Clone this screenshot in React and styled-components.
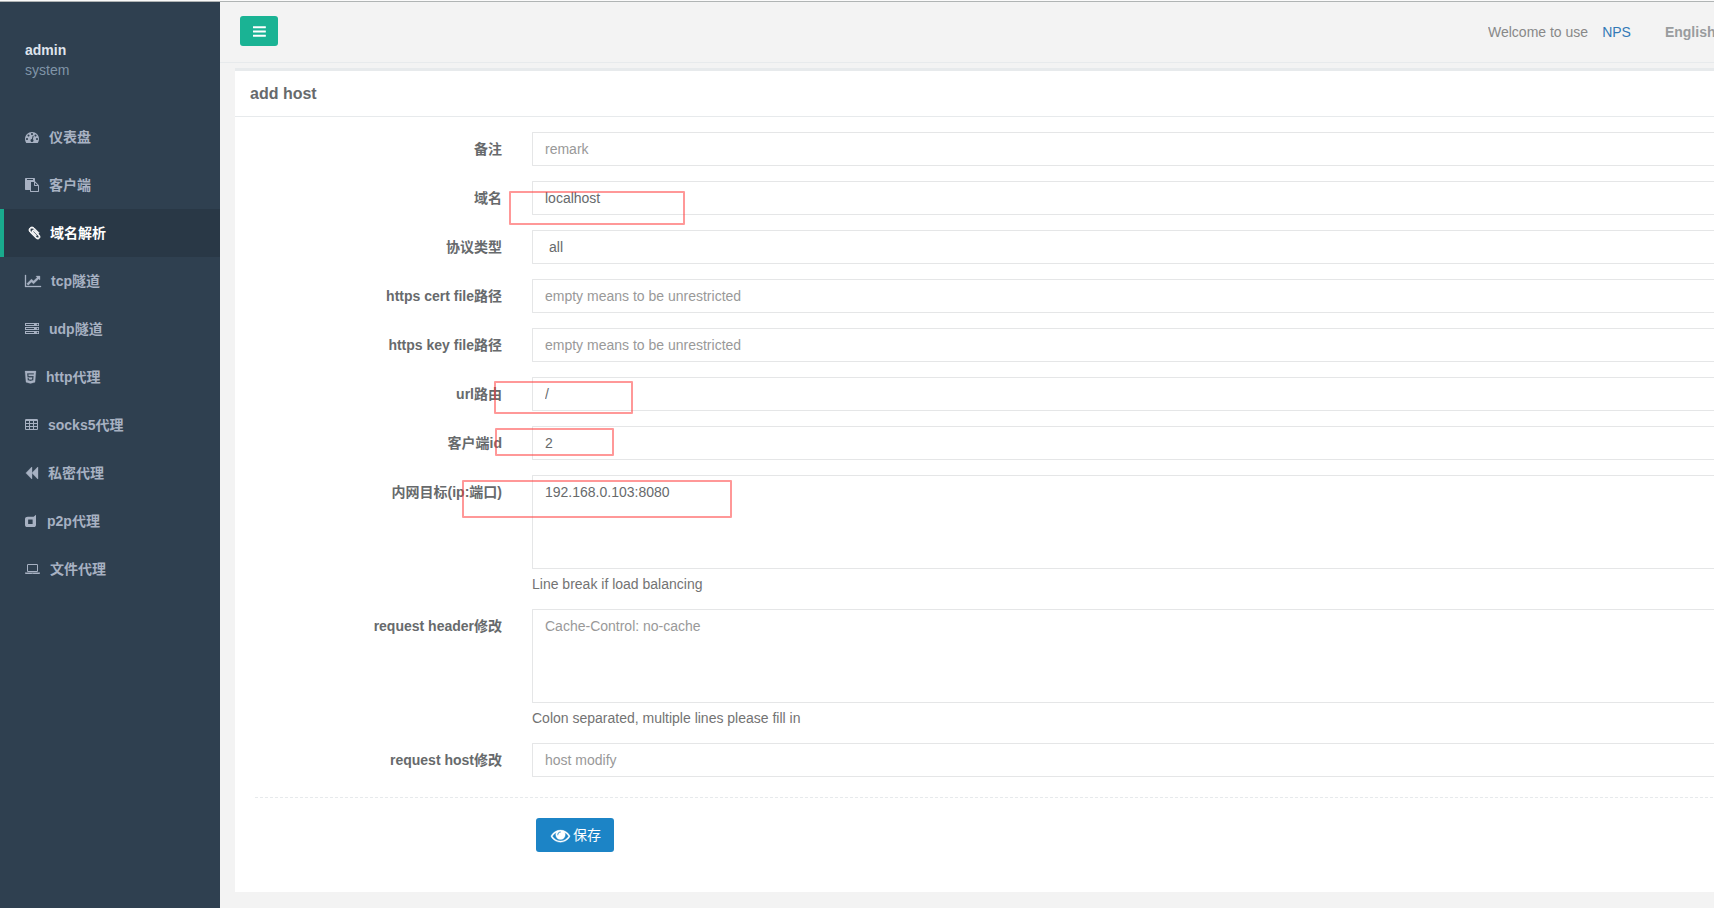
import React from 'react';
import styled, { createGlobalStyle } from 'styled-components';

const dot = 'q0-53-37.5-90.5t-90.5-37.5-90.5 37.5-37.5 90.5 37.5 90.5 90.5 37.5 90.5-37.5 37.5-90.5z';
const led = 'q0-40-28-68t-68-28-68 28-28 68 28 68 68 28 68-28 28-68z';
const cell = 'v-192q0-14-9-23t-23-9h-320q-14 0-23 9t-9 23v192q0 14 9 23t23 9h320q14 0 23-9t9-23z';

// glyphs on a 1792 unit em, w is the advance width
const icons = {
  bars: {
    w: 1536,
    d: 'M1536 1344v128q0 26-19 45t-45 19h-1408q-26 0-45-19t-19-45v-128q0-26 19-45t45-19h1408q26 0 45 19t19 45zm0-512v128q0 26-19 45t-45 19h-1408q-26 0-45-19t-19-45v-128q0-26 19-45t45-19h1408q26 0 45 19t19 45zm0-512v128q0 26-19 45t-45 19h-1408q-26 0-45-19t-19-45v-128q0-26 19-45t45-19h1408q26 0 45 19t19 45z',
  },
  dashboard: {
    w: 1792,
    d: `M384 1152${dot}m192-448${dot}m428 481l101-382q6-26-7.5-48.5t-38.5-29.5-48 6.5-30 39.5l-101 382q-60 5-107 43.5t-63 98.5q-20 77 20 146t117 89 146-20 89-117q16-60-6-117t-72-91zm660-33${dot}m-640-640${dot}m448 192${dot}m320 448q0 261-141 483-19 29-54 29h-1402q-35 0-54-29-141-221-141-483 0-182 71-348t191-286 286-191 348-71 348 71 286 191 191 286 71 348z`,
  },
  paste: {
    w: 1792,
    d: 'M768 1664h896v-640h-416q-40 0-68-28t-28-68v-416h-384v1152zm256-1440v-64q0-13-9.5-22.5t-22.5-9.5h-704q-13 0-22.5 9.5t-9.5 22.5v64q0 13 9.5 22.5t22.5 9.5h704q13 0 22.5-9.5t9.5-22.5zm256 672h299l-299-299v299zm512 128v672q0 40-28 68t-68 28h-960q-40 0-68-28t-28-68v-160h-544q-40 0-68-28t-28-68v-1344q0-40 28-68t68-28h1088q40 0 68 28t28 68v328q21 13 36 28l408 408q28 28 48 76t20 88z',
  },
  paperclip: {
    w: 1408,
    x: 192,
    bold: 110,
    d: 'M1596 1385q0 117-79 196t-196 79q-135 0-235-100l-777-776q-113-115-113-271 0-159 110-270t269-111q158 0 273 113l605 606q10 10 10 22 0 16-30.5 46.5t-46.5 30.5q-13 0-23-10l-606-607q-79-77-181-77-106 0-179 75t-73 181q0 105 76 181l776 777q63 63 145 63 64 0 106-42t42-106q0-82-63-145l-581-581q-26-24-60-24-29 0-48 19t-19 48q0 32 25 59l410 410q10 10 10 22 0 16-31 47t-47 31q-12 0-22-10l-410-410q-63-61-63-149 0-82 57-139t139-57q88 0 149 63l581 581q100 98 100 235z',
  },
  chart: {
    w: 2048,
    bold: 40,
    d: 'M2048 1536v128h-2048v-1536h128v1408h1920zm-128-1248v435q0 21-19.5 29.5t-35.5-7.5l-121-121-633 633q-10 10-23 10t-23-10l-233-233-416 416-192-192 585-585q10-10 23-10t23 10l233 233 464-464-121-121q-16-16-7.5-35.5t29.5-19.5h435q14 0 23 9t9 23z',
  },
  server: {
    w: 1792,
    d: `M128 1408h1024v-128h-1024v128zm0-512h1024v-128h-1024v128zm1568 448${led}m-1568-960h1024v-128h-1024v128zm1568 448${led}m0-512${led}m96 832v384h-1792v-384h1792zm0-512v384h-1792v-384h1792zm0-512v384h-1792v-384h1792z`,
  },
  html5: {
    w: 1408,
    bold: 30,
    d: 'M1130 589l16-175h-884l47 534h612l-22 228-197 53-196-53-13-140h-175l22 278 362 100h4v-1l359-99 50-544h-644l-15-181h674zm-1130-461h1408l-128 1438-578 162-574-162z',
  },
  table: {
    w: 1664,
    d: `M512 1376${cell}M512 992${cell}M1024 1376${cell}M1024 992${cell}M512 608${cell}M1536 1376${cell}M1024 608${cell}M1536 992${cell}M1536 608${cell}M1664 288v1088q0 66-47 113t-113 47h-1344q-66 0-113-47t-47-113v-1088q0-66 47-113t113-47h1344q66 0 113 47t47 113z`,
  },
  backward: {
    w: 1664,
    bold: 40,
    d: 'M1619 141q19-19 32-13t13 32v1472q0 26-13 32t-32-13l-710-710q-9-9-13-19v710q0 26-13 32t-32-13l-710-710q-19-19-19-45t19-45l710-710q19-19 32-13t13 32v710q4-10 13-19z',
  },
  dashcube: {
    w: 1536,
    d: 'M0 640q0-146 103-217t249-71h750l306-256v1312q0 110-78 188t-188 78h-880q-110 0-186-78t-76-188zM400 736v512q0 32 32 32h512q32 0 32-32v-512q0-32-32-32h-512q-32 0-32 32z',
  },
  laptop: {
    w: 1920,
    d: 'M416 1280q-66 0-113-47t-47-113v-704q0-66 47-113t113-47h1088q66 0 113 47t47 113v704q0 66-47 113t-113 47h-1088zm-32-864v704q0 13 9.5 22.5t22.5 9.5h1088q13 0 22.5-9.5t9.5-22.5v-704q0-13-9.5-22.5t-22.5-9.5h-1088q-13 0-22.5 9.5t-9.5 22.5zm1376 928h160v96q0 40-47 68t-113 28h-1600q-66 0-113-28t-47-68v-96h1760zm-720 96q16 0 16-16t-16-16h-160q-16 0-16 16t16 16h160z',
  },
  eye: {
    w: 1792,
    bold: 30,
    d: 'M1664 960q-152-236-381-353 61 104 61 225 0 185-131.5 316.5t-316.5 131.5-316.5-131.5-131.5-316.5q0-121 61-225-229 117-381 353 133 205 333.5 326.5t434.5 121.5 434.5-121.5 333.5-326.5zm-720-384q0-20-14-34t-34-14q-125 0-214.5 89.5t-89.5 214.5q0 20 14 34t34 14 34-14 14-34q0-86 61-147t147-61q20 0 34-14t14-34zm848 384q0 34-20 69-140 230-376.5 368.5t-499.5 138.5-499.5-139-376.5-368q-20-35-20-69t20-69q140-229 376.5-368t499.5-139 499.5 139 376.5 368q20 35 20 69z',
  },
};

const menu = [
  { icon: 'dashboard', text: '仪表盘' },
  { icon: 'paste', text: '客户端' },
  { icon: 'paperclip', text: '域名解析', active: true },
  { icon: 'chart', text: 'tcp隧道' },
  { icon: 'server', text: 'udp隧道' },
  { icon: 'html5', text: 'http代理' },
  { icon: 'table', text: 'socks5代理' },
  { icon: 'backward', text: '私密代理' },
  { icon: 'dashcube', text: 'p2p代理' },
  { icon: 'laptop', text: '文件代理' },
];

const fields = [
  { label: '备注', placeholder: 'remark' },
  { label: '域名', value: 'localhost' },
  { label: '协议类型', value: 'all', select: true },
  { label: 'https cert file路径', placeholder: 'empty means to be unrestricted' },
  { label: 'https key file路径', placeholder: 'empty means to be unrestricted' },
  { label: 'url路由', value: '/' },
  { label: '客户端id', value: '2' },
  {
    label: '内网目标(ip:端口)',
    value: '192.168.0.103:8080',
    area: true,
    help: 'Line break if load balancing',
  },
  {
    label: 'request header修改',
    placeholder: 'Cache-Control: no-cache',
    area: true,
    help: 'Colon separated, multiple lines please fill in',
  },
  { label: 'request host修改', placeholder: 'host modify' },
];

function Icon({ name, size = 14 }) {
  const { w, d, x = 0, bold = 0 } = icons[name];
  return (
    <Glyph viewBox={`${x} 0 ${w} 1792`} width={(w / 1792) * size} height={size}>
      <path
        d={d}
        fillRule={name === 'backward' ? 'nonzero' : 'evenodd'}
        stroke="currentColor"
        strokeWidth={bold}
      />
    </Glyph>
  );
}

function Field({ label, value, placeholder, select, area, help }) {
  return (
    <Group>
      <Label>{label}</Label>
      <Control>
        {select && (
          <Select defaultValue={value}>
            <option>{value}</option>
          </Select>
        )}
        {area && <TextArea defaultValue={value} placeholder={placeholder} spellCheck="false" />}
        {!select && !area && <Input defaultValue={value} placeholder={placeholder} />}
        {help && <Help>{help}</Help>}
      </Control>
    </Group>
  );
}

function App() {
  return (
    <Page>
      <GlobalStyle />
      <Wrapper>
        <Sidebar>
          <Profile>
            <strong>admin</strong>
            <span>system</span>
          </Profile>
          {menu.map((item) => (
            <MenuItem key={item.text} $active={item.active}>
              <Icon name={item.icon} />
              <span>{item.text}</span>
            </MenuItem>
          ))}
        </Sidebar>
        <Main>
          <TopBar>
            <Toggle>
              <Icon name="bars" size={15} />
            </Toggle>
            <TopLinks>
              <span>Welcome to use</span>
              <a>NPS</a>
              <strong>English</strong>
            </TopLinks>
          </TopBar>
          <Box>
            <BoxTitle>add host</BoxTitle>
            <Form>
              {fields.map((field) => (
                <Field key={field.label} {...field} />
              ))}
              <Divider />
              <Save>
                <Icon name="eye" size={19} />
                保存
              </Save>
            </Form>
          </Box>
        </Main>
      </Wrapper>
      <Mark $x={509} $y={191} $w={176} $h={34} />
      <Mark $x={494} $y={381} $w={139} $h={33} />
      <Mark $x={495} $y={428} $w={119} $h={28} />
      <Mark $x={462} $y={480} $w={270} $h={38} />
    </Page>
  );
}

export default App;

const GlobalStyle = createGlobalStyle`
  * {
    box-sizing: border-box;
  }
  body {
    margin: 0;
    overflow: hidden;
    color: #676a6c;
    background: #f3f3f3;
    font: 14px/20px 'Liberation Sans', 'Noto Sans CJK SC', sans-serif;
  }
  input, textarea, select, button {
    font: inherit;
    color: inherit;
  }
`;

const Page = styled.div`
  position: relative;
  height: 908px;
  border-top: 1px solid #fafafa;
  overflow: hidden;
`;

const Wrapper = styled.div`
  display: flex;
  height: 907px;
  border-top: 1px solid #b0b4b4;
`;

const Glyph = styled.svg`
  flex: none;
  fill: currentColor;
  overflow: visible;
`;

const Sidebar = styled.nav`
  flex: none;
  width: 220px;
  background: #2f4050;
`;

const Profile = styled.div`
  display: flex;
  flex-direction: column;
  height: 111px;
  padding: 38px 25px 0;
  color: #8095a8;
  strong {
    color: #dfe4ed;
  }
`;

const MenuItem = styled.a`
  display: flex;
  align-items: center;
  gap: 10px;
  height: 48px;
  padding-left: 25px;
  font-weight: 600;
  white-space: nowrap;
  color: ${(props) => (props.$active ? '#fff' : '#a7b1c2')};
  background: ${(props) => (props.$active ? '#293846' : 'none')};
  border-left: ${(props) => (props.$active ? '4px solid #19aa8d' : 'none')};
`;

const Main = styled.main`
  flex: 1;
  min-width: 0;
`;

const TopBar = styled.header`
  display: flex;
  justify-content: space-between;
  height: 61px;
  padding: 14px 0 0 20px;
  border-bottom: 1px solid #e7eaec;
`;

const Toggle = styled.button`
  display: flex;
  align-items: center;
  justify-content: center;
  width: 38px;
  height: 30px;
  padding: 0;
  border: 0;
  border-radius: 3px;
  color: #fff;
  background: #1ab394;
`;

const TopLinks = styled.div`
  display: flex;
  width: 226px;
  padding-top: 6px;
  overflow: hidden;
  white-space: nowrap;
  color: #888888;
  a {
    margin-left: 14px;
    color: #337ab7;
  }
  strong {
    margin-left: 34px;
    color: #999c9e;
  }
`;

const Box = styled.section`
  height: 824px;
  margin: 5px 0 0 15px;
  background: #fff;
  border-top: 3px solid #e7eaec;
`;

const BoxTitle = styled.h5`
  height: 46px;
  margin: 0;
  padding: 13px 15px 0;
  font-size: 16px;
  border-bottom: 1px solid #e7eaec;
`;

const Form = styled.form`
  padding: 15px 0 0 5px;
`;

const Group = styled.div`
  display: flex;
  margin-bottom: 15px;
`;

const Label = styled.label`
  flex: none;
  width: 277px;
  padding: 7px 15px 0 0;
  font-weight: bold;
  text-align: right;
`;

const Control = styled.div`
  flex: 1;
  padding-left: 15px;
`;

/* fields run to the right edge of the window */
const Input = styled.input`
  display: block;
  width: 100%;
  height: 34px;
  padding: 6px 12px;
  border: 1px solid #e5e6e7;
  border-right: 0;
  border-radius: 1px 0 0 1px;
  background: #fff;
  outline: none;
  &::placeholder {
    color: #999;
  }
`;

const TextArea = styled(Input).attrs({ as: 'textarea' })`
  height: 94px;
  resize: none;
`;

const Select = styled(Input).attrs({ as: 'select' })`
  padding-left: 16px;
  appearance: none;
`;

const Help = styled.span`
  display: block;
  margin-top: 5px;
  color: #737373;
`;

const Divider = styled.div`
  height: 1px;
  margin: 20px 0 20px 15px;
  background: repeating-linear-gradient(90deg, #e7eaec 0 3px, transparent 3px 5px);
`;

const Save = styled.button`
  display: flex;
  align-items: center;
  width: 78px;
  height: 34px;
  margin-left: 296px;
  padding: 0 0 0 15px;
  gap: 3px;
  border: 0;
  border-radius: 3px;
  color: #fff;
  background: #1c84c6;
`;

const Mark = styled.div`
  position: absolute;
  left: ${(props) => props.$x}px;
  top: ${(props) => props.$y - 1}px;
  width: ${(props) => props.$w}px;
  height: ${(props) => props.$h}px;
  border: 2px solid rgba(255, 50, 50, 0.5);
  border-radius: 1px;
  pointer-events: none;
`;
